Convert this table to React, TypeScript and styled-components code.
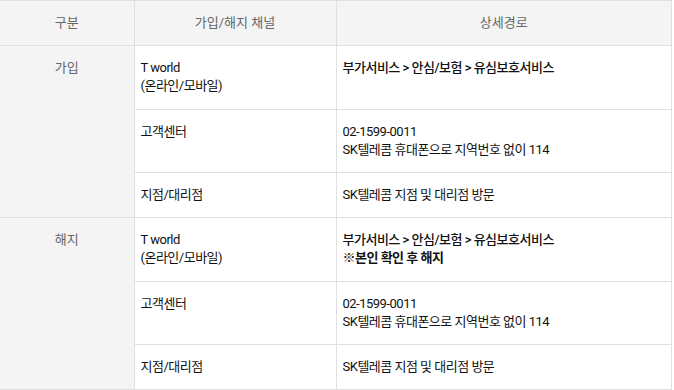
import React from 'react';
import styled, { createGlobalStyle } from 'styled-components';

const GlobalStyle = createGlobalStyle`
  body {
    margin: 0;
    background: #fff;
    font-family: 'Roboto', 'Noto Sans CJK KR', sans-serif;
  }
`;

const Table = styled.table`
  width: 672px;
  border-collapse: collapse;
  table-layout: fixed;
  font-size: 13px;
  line-height: 1.4;
  border-top: 1px solid #e0e0e0;
  border-right: 1px solid #e0e0e0;
  border-bottom: 1px solid #e0e0e0;
`;

const HeadCell = styled.th`
  background: #f4f4f4;
  color: #666;
  font-weight: 400;
  text-align: center;
  padding: 13px 6px;
  border-bottom: 1px solid #e0e0e0;
  border-left: 1px solid #e0e0e0;
  &:first-child {
    border-left: none;
  }
`;

const GroupCell = styled.th`
  background: #f4f4f4;
  color: #666;
  font-weight: 400;
  text-align: center;
  vertical-align: top;
  padding: 13px 6px;
  border-bottom: 1px solid #e0e0e0;
`;

const Cell = styled.td<{ $strong?: boolean }>`
  color: #111;
  vertical-align: top;
  padding: 13px 6px;
  letter-spacing: -0.5px;
  border-left: 1px solid #e0e0e0;
  border-bottom: 1px solid #e0e0e0;
  font-weight: ${p => (p.$strong ? 500 : 400)};
`;

const Line = styled.span<{ $bold?: boolean }>`
  display: block;
  font-weight: ${p => (p.$bold ? 700 : 'inherit')};
`;

type Row = { channel: string[]; route: string[]; strongRoute?: boolean; boldLast?: boolean };

const groups: { name: string; rows: Row[] }[] = [
  {
    name: '가입',
    rows: [
      { channel: ['T world', '(온라인/모바일)'], route: ['부가서비스 > 안심/보험 > 유심보호서비스'], strongRoute: true },
      { channel: ['고객센터'], route: ['02-1599-0011', 'SK텔레콤 휴대폰으로 지역번호 없이 114'] },
      { channel: ['지점/대리점'], route: ['SK텔레콤 지점 및 대리점 방문'] },
    ],
  },
  {
    name: '해지',
    rows: [
      {
        channel: ['T world', '(온라인/모바일)'],
        route: ['부가서비스 > 안심/보험 > 유심보호서비스', '※본인 확인 후 해지'],
        strongRoute: true,
        boldLast: true,
      },
      { channel: ['고객센터'], route: ['02-1599-0011', 'SK텔레콤 휴대폰으로 지역번호 없이 114'] },
      { channel: ['지점/대리점'], route: ['SK텔레콤 지점 및 대리점 방문'] },
    ],
  },
];

export default function App() {
  return (
    <>
      <GlobalStyle />
      <Table>
        <colgroup>
          <col style={{ width: 134 }} />
          <col style={{ width: 202 }} />
          <col />
        </colgroup>
        <thead>
          <tr>
            <HeadCell>구분</HeadCell>
            <HeadCell>가입/해지 채널</HeadCell>
            <HeadCell>상세경로</HeadCell>
          </tr>
        </thead>
        <tbody>
          {groups.map(g =>
            g.rows.map((r, i) => (
              <tr key={g.name + i}>
                {i === 0 && <GroupCell rowSpan={g.rows.length}>{g.name}</GroupCell>}
                <Cell>
                  {r.channel.map(t => (
                    <Line key={t}>{t}</Line>
                  ))}
                </Cell>
                <Cell $strong={r.strongRoute}>
                  {r.route.map((t, j) => (
                    <Line key={t} $bold={r.boldLast && j === r.route.length - 1}>
                      {t}
                    </Line>
                  ))}
                </Cell>
              </tr>
            ))
          )}
        </tbody>
      </Table>
    </>
  );
}
